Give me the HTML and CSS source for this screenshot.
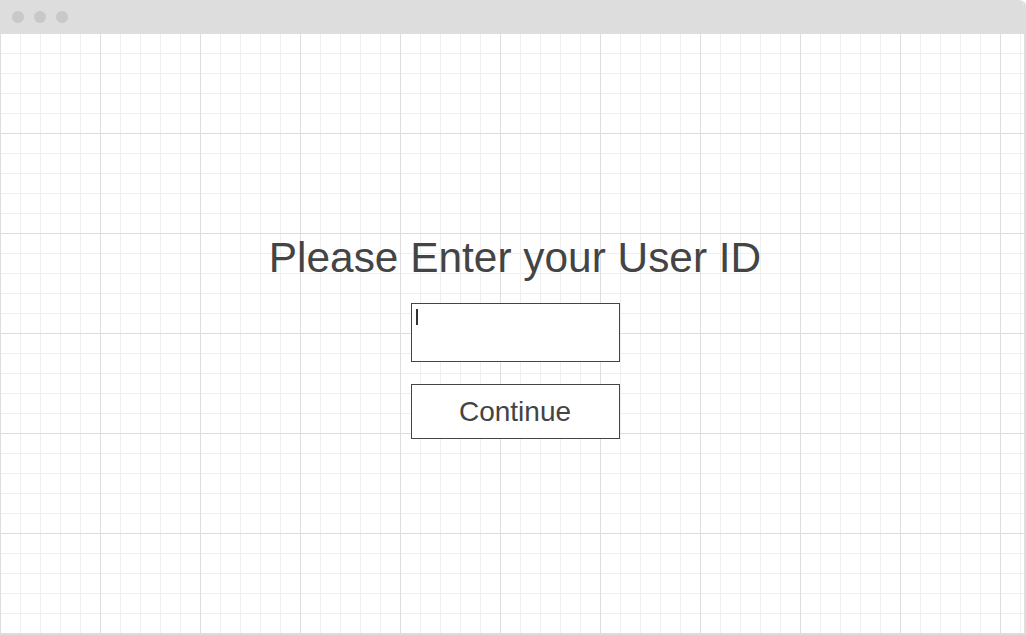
FILE: index.html
```html
<!DOCTYPE html>
<html lang="en">
<head>
<meta charset="utf-8">
<title>User ID</title>
<link rel="stylesheet" href="styles.css">
</head>
<body>
<div class="window">
  <div class="titlebar">
    <span class="dot"></span>
    <span class="dot"></span>
    <span class="dot"></span>
  </div>
  <main class="canvas">
    <h1 class="heading">Please Enter your User ID</h1>
    <div class="field"><span class="caret"></span></div>
    <div class="button">Continue</div>
  </main>
</div>
</body>
</html>
```
FILE: styles.css
```css
* { box-sizing: border-box; }
html, body { margin: 0; padding: 0; background: #ffffff; }
body { font-family: "Liberation Sans", Arial, sans-serif; color: #444444; }

.window {
  width: 1026px;
  height: 635px;
  border-right: 2px solid #dddddd;
  border-bottom: 2px solid #dddddd;
  border-top-right-radius: 6px;
  overflow: hidden;
  display: flex;
  flex-direction: column;
}

.titlebar {
  height: 33px;
  flex: none;
  background: #dddddd;
  border-top-right-radius: 5px;
  display: flex;
  align-items: center;
  gap: 10px;
  padding-left: 12px;
}
.dot {
  width: 12px;
  height: 12px;
  border-radius: 50%;
  background: #c8c8c8;
}

.canvas {
  flex: 1;
  background-color: #ffffff;
  background-image:
    linear-gradient(to right, #dedede 1px, transparent 1px),
    linear-gradient(to bottom, #dedede 1px, transparent 1px),
    linear-gradient(to right, #efefef 1px, transparent 1px),
    linear-gradient(to bottom, #efefef 1px, transparent 1px);
  background-size: 100px 100px, 100px 100px, 20px 20px, 20px 20px;
  display: flex;
  flex-direction: column;
  align-items: center;
  padding-top: 201px;
  padding-left: 6px;
}

.heading {
  margin: 0;
  font-size: 42.4px;
  line-height: 48px;
  font-weight: normal;
  color: #444444;
}

.field {
  margin-top: 21px;
  width: 209px;
  height: 59px;
  border: 1px solid #444444;
  background: #ffffff;
  padding: 5px 0 0 4px;
}
.caret {
  display: block;
  width: 2px;
  height: 16px;
  background: #333333;
}

.button {
  margin-top: 22px;
  width: 209px;
  height: 55px;
  border: 1px solid #444444;
  background: #ffffff;
  font-size: 28px;
  line-height: 53px;
  text-align: center;
  color: #444444;
}
```
